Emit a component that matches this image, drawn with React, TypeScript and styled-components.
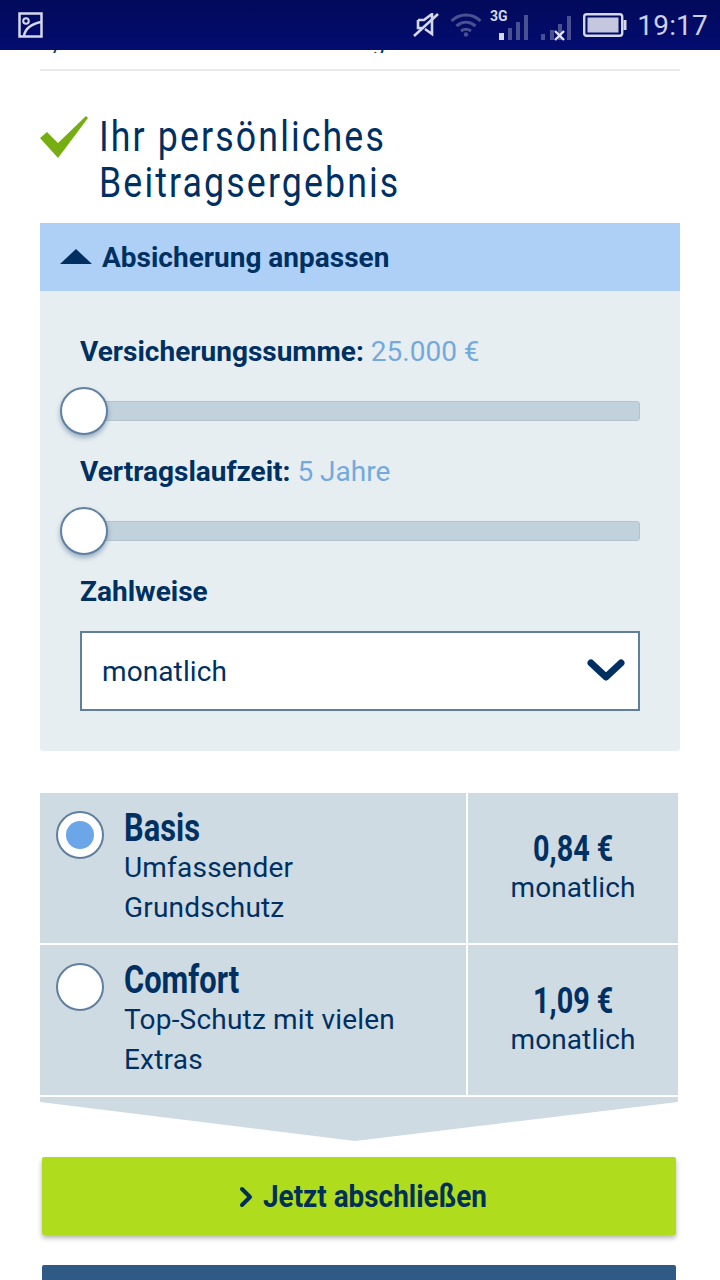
import styled, { createGlobalStyle } from 'styled-components';

const NAVY = '#003062';
const BAR_DIM = '#4a5190';
const BAR_LIT = '#d5d8ea';

const GlobalStyle = createGlobalStyle`
  html, body {
    margin: 0;
    padding: 0;
    background: #fff;
    font-family: Roboto, "Liberation Sans", sans-serif;
    color: ${NAVY};
  }
  * { box-sizing: border-box; }
`;

const Page = styled.div`
  width: 720px;
  height: 1280px;
  overflow: hidden;
  background: #fff;
`;

const StatusBar = styled.div`
  height: 50px;
  display: flex;
  align-items: center;
  padding: 0 12px 0 18px;
  background: linear-gradient(#010a5a, #040c70);
  color: ${BAR_LIT};
`;

const StatusIcons = styled.div`
  margin-left: auto;
  display: flex;
  align-items: center;
`;

const Clock = styled.span`
  font-size: 28px;
  margin-left: 10px;
  letter-spacing: 0.2px;
  color: #cdd1e6;
`;

const ClippedLine = styled.div`
  height: 3px;
  overflow: hidden;
  display: flex;
  padding: 0 0 0 50px;
  gap: 312px;
  font-size: 22px;
  line-height: 22px;
  & > span {
    display: block;
    margin-top: -18px;
  }
`;

const Divider = styled.div`
  height: 2px;
  margin: 16px 40px 0;
  background: #e9ecea;
`;

const Heading = styled.div`
  display: flex;
  margin: 44px 40px 0;
  height: 108px;
`;

const Check = styled.svg`
  flex: none;
  width: 50px;
  height: 44px;
  margin-top: 1px;
`;

const Title = styled.h1`
  margin: -1px 0 0 9px;
  font-size: 42px;
  line-height: 46px;
  font-weight: 400;
  letter-spacing: 2.5px;
  transform: scaleX(0.85);
  transform-origin: left top;
  white-space: nowrap;
`;

const PanelHeader = styled.div`
  height: 68px;
  margin: 0 40px;
  display: flex;
  align-items: center;
  gap: 10px;
  padding-left: 20px;
  background: #aed0f7;
  font-size: 28px;
  font-weight: 700;
`;

const Panel = styled.section`
  margin: 0 40px;
  height: 460px;
  padding: 41px 40px 0;
  border-radius: 0 0 3px 3px;
  background: #e7eef1;
`;

const FieldLabel = styled.div`
  height: 40px;
  font-size: 28px;
  line-height: 40px;
  font-weight: 700;
`;

const FieldValue = styled.span`
  font-weight: 400;
  color: #74a9dd;
`;

const Track = styled.div`
  position: relative;
  height: 20px;
  margin: 29px 0 31px;
  border: 1px solid #b2c4d0;
  border-radius: 3px;
  background: #c2d2dc;
`;

const Thumb = styled.div`
  position: absolute;
  left: -21px;
  top: -15px;
  width: 48px;
  height: 48px;
  border-radius: 50%;
  border: 2px solid #5f80a0;
  background: #fff;
  box-shadow: 0 3px 5px rgba(60, 100, 140, 0.45);
`;

const Select = styled.div`
  height: 80px;
  margin-top: 19px;
  display: flex;
  align-items: center;
  justify-content: space-between;
  padding: 0 13px 0 20px;
  border: 2px solid #5f7f9e;
  background: #fff;
  font-size: 28px;
  letter-spacing: 0.1px;
`;

const Plans = styled.div`
  margin: 42px 42px 0 40px;
  display: flex;
  flex-direction: column;
  gap: 2px;
`;

const PlanRow = styled.div`
  height: 150px;
  display: grid;
  grid-template-columns: 426px 1fr;
  gap: 2px;
`;

const PlanInfo = styled.div`
  display: flex;
  background: #cfdbe3;
  padding: 18px 0 0 16px;
`;

const Radio = styled.div<{ $selected?: boolean }>`
  flex: none;
  width: 48px;
  height: 48px;
  border-radius: 50%;
  border: 2px solid #5f7f9e;
  background: #fff;
  display: flex;
  align-items: center;
  justify-content: center;
  &::after {
    content: '';
    width: 28px;
    height: 28px;
    border-radius: 50%;
    background: ${(p) => (p.$selected ? '#6aa6e8' : 'transparent')};
  }
`;

const PlanText = styled.div`
  margin-left: 20px;
  margin-top: -3px;
`;

const PlanName = styled.div`
  font-size: 39px;
  line-height: 40px;
  font-weight: 700;
  transform: scaleX(0.79);
  transform-origin: left center;
`;

const PlanDesc = styled.div`
  font-size: 28px;
  line-height: 40px;
  letter-spacing: 0.2px;
`;

const PlanPrice = styled.div`
  background: #cfdbe3;
  display: flex;
  flex-direction: column;
  align-items: center;
  padding-top: 35px;
`;

const Amount = styled.div`
  font-size: 36px;
  line-height: 42px;
  font-weight: 700;
  transform: scaleX(0.8);
`;

const Interval = styled.div`
  font-size: 28px;
  line-height: 36px;
  letter-spacing: 0.1px;
`;

const PointerArrow = styled.div`
  height: 44px;
  margin: 2px 42px 0 40px;
  background: #cfdbe3;
  clip-path: polygon(0 0, 100% 0, 100% 5px, 315px 100%, 0 5px);
`;

const PrimaryButton = styled.button`
  width: 634px;
  height: 78px;
  margin: 16px 0 0 42px;
  padding: 1px 0 0 9px;
  border: 0;
  border-radius: 2px;
  background: #b0dc1e;
  box-shadow: 0 3px 5px rgba(0, 0, 0, 0.3);
  color: #003057;
  font-family: inherit;
  font-size: 31px;
  font-weight: 700;
  display: flex;
  align-items: center;
  justify-content: center;
  gap: 10px;
`;

const ButtonLabel = styled.span`
  display: inline-block;
  transform: scaleX(0.9);
  transform-origin: left center;
  width: 225px;
  white-space: nowrap;
`;

const SecondaryButton = styled.div`
  width: 634px;
  height: 78px;
  margin: 30px 0 0 42px;
  border-radius: 2px;
  background: #2f5a85;
`;

const ImageIcon = () => (
  <svg width="26" height="26" viewBox="0 0 26 26" fill="none" stroke={BAR_LIT} strokeWidth="2.5">
    <rect x="1.5" y="1.5" width="22" height="23" />
    <circle cx="8" cy="9" r="2.8" strokeWidth="2" />
    <path d="M6 24c1-7 7-12 17-14" />
  </svg>
);

const MuteIcon = () => (
  <svg width="26" height="24" viewBox="0 0 26 24" fill="none" stroke={BAR_LIT} strokeWidth="2.6">
    <path d="M5 7h6l8-6v20l-7-5" />
    <path d="M5 7v8h4" />
    <path d="M1 23 25 1" />
  </svg>
);

const WifiIcon = () => (
  <svg width="32" height="24" viewBox="0 0 32 24" fill="none" stroke={BAR_DIM} strokeWidth="3" style={{ marginLeft: 11 }}>
    <path d="M1.5 8c8-8 21-8 29 0" />
    <path d="M6.5 13c6-5 13-5 19 0" />
    <path d="M11 18c3-2 7-2 10 0" />
    <circle cx="16" cy="21.5" r="2.2" fill={BAR_DIM} stroke="none" />
  </svg>
);

const MobileIcon = () => (
  <svg width="39" height="32" viewBox="0 0 39 32" style={{ marginLeft: 8 }}>
    <text x="0" y="12" fontSize="14" fontWeight="700" fontFamily="Roboto, sans-serif" fill={BAR_LIT}>3G</text>
    <rect x="9" y="24" width="5" height="7" fill={BAR_LIT} />
    <rect x="18" y="19" width="4" height="12" fill={BAR_DIM} />
    <rect x="26" y="13" width="4" height="18" fill={BAR_DIM} />
    <rect x="34" y="6" width="4" height="25" fill={BAR_DIM} />
  </svg>
);

const NoSimIcon = () => (
  <svg width="30" height="25" viewBox="0 0 30 25" style={{ marginLeft: 12, marginTop: 6 }}>
    <rect x="0" y="18" width="4" height="6" fill={BAR_DIM} />
    <rect x="9" y="14" width="4" height="10" fill={BAR_DIM} />
    <rect x="17" y="8" width="4" height="16" fill={BAR_DIM} />
    <rect x="26" y="0" width="4" height="24" fill={BAR_DIM} />
    <path d="M14 15l9 9M23 15l-9 9" stroke="#e4e6f2" strokeWidth="2.4" />
  </svg>
);

const BatteryIcon = () => (
  <svg width="44" height="24" viewBox="0 0 44 24" style={{ marginLeft: 12 }}>
    <rect x="1.2" y="1.2" width="38" height="21.6" rx="2.5" fill="none" stroke={BAR_LIT} strokeWidth="2.4" />
    <rect x="4.5" y="4.5" width="31" height="15" fill="#c4c7de" />
    <rect x="40.5" y="7" width="3" height="10" fill={BAR_LIT} />
  </svg>
);

const plans = [
  { name: 'Basis', desc: ['Umfassender', 'Grundschutz'], price: '0,84 €', selected: true },
  { name: 'Comfort', desc: ['Top-Schutz mit vielen', 'Extras'], price: '1,09 €', selected: false },
];

const App = () => (
  <Page>
    <GlobalStyle />
    <StatusBar>
      <ImageIcon />
      <StatusIcons>
        <MuteIcon />
        <WifiIcon />
        <MobileIcon />
        <NoSimIcon />
        <BatteryIcon />
        <Clock>19:17</Clock>
      </StatusIcons>
    </StatusBar>
    <ClippedLine>
      <span>y</span>
      <span>g</span>
    </ClippedLine>
    <Divider />
    <Heading>
      <Check viewBox="0 0 50 44">
        <path d="M0 22 7 16 18 27 46 0 48 2 18 42Z" fill="#76ae12" />
      </Check>
      <Title>
        Ihr persönliches
        <br />
        Beitragsergebnis
      </Title>
    </Heading>
    <PanelHeader>
      <svg width="32" height="16" viewBox="0 0 32 16">
        <path d="M16 0 32 15H0Z" fill={NAVY} />
      </svg>
      Absicherung anpassen
    </PanelHeader>
    <Panel>
      <FieldLabel>
        Versicherungssumme: <FieldValue>25.000 €</FieldValue>
      </FieldLabel>
      <Track>
        <Thumb />
      </Track>
      <FieldLabel>
        Vertragslaufzeit: <FieldValue>5 Jahre</FieldValue>
      </FieldLabel>
      <Track>
        <Thumb />
      </Track>
      <FieldLabel>Zahlweise</FieldLabel>
      <Select>
        monatlich
        <svg width="38" height="24" viewBox="0 0 38 24" fill="none" stroke={NAVY} strokeWidth="7" strokeLinecap="round" strokeLinejoin="round">
          <path d="M4 4 19 18 34 4" />
        </svg>
      </Select>
    </Panel>
    <Plans>
      {plans.map((plan) => (
        <PlanRow key={plan.name}>
          <PlanInfo>
            <Radio $selected={plan.selected} />
            <PlanText>
              <PlanName>{plan.name}</PlanName>
              {plan.desc.map((line) => (
                <PlanDesc key={line}>{line}</PlanDesc>
              ))}
            </PlanText>
          </PlanInfo>
          <PlanPrice>
            <Amount>{plan.price}</Amount>
            <Interval>monatlich</Interval>
          </PlanPrice>
        </PlanRow>
      ))}
    </Plans>
    <PointerArrow />
    <PrimaryButton>
      <svg width="14" height="22" viewBox="0 0 14 22" fill="none" stroke="#003057" strokeWidth="4" strokeLinecap="round" strokeLinejoin="round">
        <path d="M3 3 11 11 3 19" />
      </svg>
      <ButtonLabel>Jetzt abschließen</ButtonLabel>
    </PrimaryButton>
    <SecondaryButton />
  </Page>
);

export default App;
